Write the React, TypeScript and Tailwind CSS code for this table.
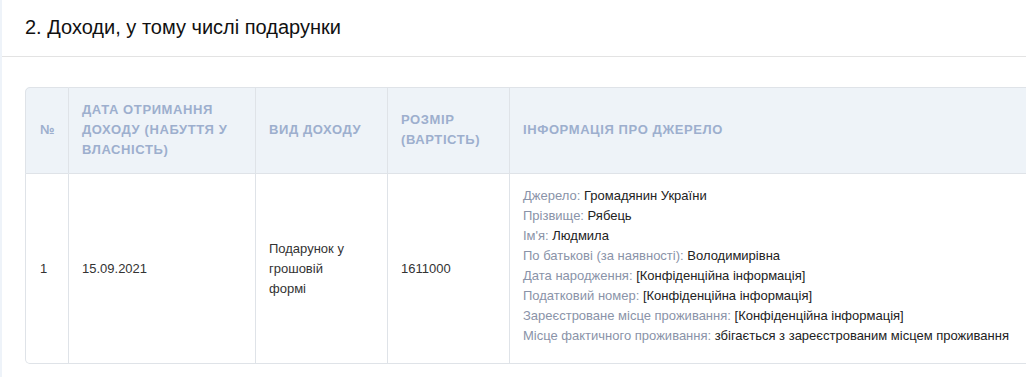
import React from "react";

const info: [string, string][] = [
  ["Джерело:", "Громадянин України"],
  ["Прізвище:", "Рябець"],
  ["Ім'я:", "Людмила"],
  ["По батькові (за наявності):", "Володимирівна"],
  ["Дата народження:", "[Конфіденційна інформація]"],
  ["Податковий номер:", "[Конфіденційна інформація]"],
  ["Зареєстроване місце проживання:", "[Конфіденційна інформація]"],
  ["Місце фактичного проживання:", "збігається з зареєстрованим місцем проживання"],
];

export default function App() {
  return (
    <div
      className="w-[1026px] h-[377px] overflow-hidden bg-[#eef3f9] flex"
      style={{ fontFamily: '"Liberation Sans", Arial, sans-serif' }}
    >
      <div className="ml-[2px] flex-1 bg-white flex flex-col min-w-0">
        <div className="h-[57px] border-b border-[#e3e3e3] pl-[23px] pt-[15px]">
          <h2 className="text-[20px] leading-[24px] text-[#111]">2. Доходи, у тому числі подарунки</h2>
        </div>
        <div className="pl-[23px] pt-[30px] overflow-hidden">
          <table className="border-separate border-spacing-0 w-[1100px] text-[13px] text-[#333] table-fixed">
            <colgroup>
              <col className="w-[44px]" />
              <col className="w-[187px]" />
              <col className="w-[132px]" />
              <col className="w-[122px]" />
              <col />
            </colgroup>
            <thead>
              <tr className="bg-[#eef3f8] text-[#9dafce] font-bold uppercase tracking-[0.6px] leading-[20px] text-left">
                <th className="border border-[#dfe3e8] rounded-tl-[5px] px-[14px] pt-[12px] pb-[13px] font-bold">№</th>
                <th className="border-y border-r border-[#dfe3e8] px-[13px] pt-[12px] pb-[13px] font-bold">
                  Дата отримання доходу (набуття у власність)
                </th>
                <th className="border-y border-r border-[#dfe3e8] px-[13px] pt-[12px] pb-[13px] font-bold">Вид доходу</th>
                <th className="border-y border-r border-[#dfe3e8] px-[13px] pt-[12px] pb-[13px] font-bold">Розмір (вартість)</th>
                <th className="border-y border-r border-[#dfe3e8] px-[13px] pt-[12px] pb-[13px] font-bold">Інформація про джерело</th>
              </tr>
            </thead>
            <tbody>
              <tr className="leading-[20px] align-middle">
                <td className="border-x border-b border-[#dfe3e8] rounded-bl-[5px] px-[14px]">1</td>
                <td className="border-r border-b border-[#dfe3e8] px-[13px]">15.09.2021</td>
                <td className="border-r border-b border-[#dfe3e8] px-[13px]">
                  Подарунок у
                  <br />
                  грошовій
                  <br />
                  формі
                </td>
                <td className="border-r border-b border-[#dfe3e8] px-[13px]">1611000</td>
                <td className="border-r border-b border-[#dfe3e8] px-[13px] pt-[12px] pb-[17px] text-[13px] leading-[20px]">
                  {info.map(([k, v]) => (
                    <div key={k} className="whitespace-nowrap">
                      <span className="text-[#8a93a8]">{k}</span> <span className="text-[#222]">{v}</span>
                    </div>
                  ))}
                </td>
              </tr>
            </tbody>
          </table>
        </div>
      </div>
    </div>
  );
}
